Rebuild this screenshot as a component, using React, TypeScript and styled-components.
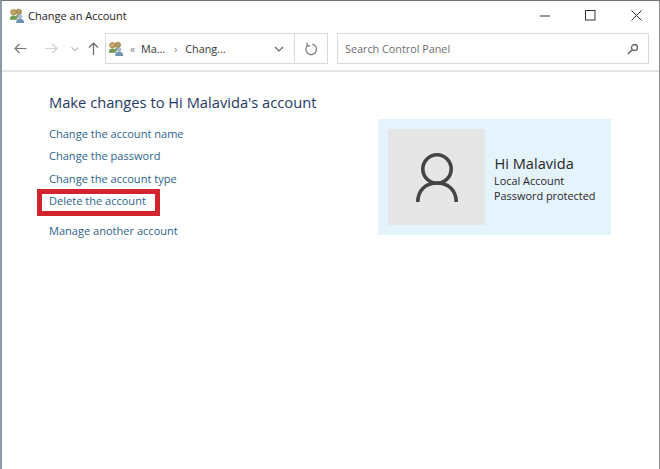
import React from 'react'
import styled, { createGlobalStyle } from 'styled-components'

const GlobalStyle = createGlobalStyle`
  html, body {
    margin: 0;
    padding: 0;
    background: #fff;
  }
`

const Window = styled.div`
  box-sizing: border-box;
  width: 660px;
  height: 469px;
  overflow: hidden;
  background: #fff;
  border-top: 1px solid #70757a;
  border-left: 2px solid #8c9ba8;
  border-right: 1px solid #8a8a8a;
  font-family: 'Open Sans', 'Liberation Sans', sans-serif;
`

const TitleBar = styled.div`
  display: flex;
  align-items: center;
  height: 29px;
  padding-left: 7px;
`

const TitleText = styled.span`
  margin-left: 3px;
  font-size: 11px;
  color: #222;
`

const WindowButtons = styled.div`
  display: flex;
  margin-left: auto;
`

const WindowButton = styled.div`
  display: flex;
  align-items: center;
  justify-content: center;
  width: 45.5px;
  height: 29px;
`

const NavBar = styled.div`
  display: flex;
  align-items: center;
  height: 33px;
  margin-top: 2px;
  padding-right: 10px;
`

const NavButtons = styled.div`
  display: flex;
  align-items: center;
  box-sizing: border-box;
  width: 103px;
  padding-left: 12px;
`

const NavIcon = styled.span<{ $gap: number }>`
  display: flex;
  margin-left: ${(p) => p.$gap}px;
`

const AddressBox = styled.div`
  display: flex;
  align-items: center;
  box-sizing: border-box;
  width: 223px;
  height: 31px;
  border: 1px solid #dadada;
  font-size: 10.8px;
  color: #333;
`

const Crumbs = styled.div`
  display: flex;
  align-items: center;
  flex: 1;
  padding-left: 2px;
`

const CrumbSep = styled.span<{ $wide?: boolean }>`
  margin: 0 ${(p) => (p.$wide ? '8px' : '6px')} 0 ${(p) => (p.$wide ? '9px' : '6px')};
  font-size: 10px;
  color: #777;
`

const RefreshCell = styled.div`
  display: flex;
  align-items: center;
  justify-content: center;
  width: 32px;
  height: 100%;
  border-left: 1px solid #dadada;
`

const DropCell = styled.div`
  display: flex;
  margin-right: 10px;
`

const SearchBox = styled.div`
  display: flex;
  align-items: center;
  justify-content: space-between;
  box-sizing: border-box;
  width: 312px;
  height: 31px;
  margin-left: 9px;
  padding: 0 9px 0 7px;
  border: 1px solid #dadada;
  font-size: 10.8px;
  color: #6d6d6d;
`

const Divider = styled.div`
  height: 2px;
  margin-top: 5px;
  background: #e6e6e6;
`

const Content = styled.div`
  display: flex;
  align-items: flex-start;
  padding: 20px 47px 0 47px;
`

const Tasks = styled.div`
  display: flex;
  flex-direction: column;
  width: 329px;
`

const Heading = styled.h1`
  margin: 0 0 11px;
  font-size: 14.7px;
  line-height: 20px;
  font-weight: 400;
  color: #1f3a66;
`

const TaskLink = styled.a<{ $highlight?: boolean; $gap?: boolean }>`
  position: relative;
  align-self: flex-start;
  height: 22.4px;
  line-height: 22.4px;
  margin-top: ${(p) => (p.$gap ? '7.5px' : '0')};
  font-size: 11.05px;
  color: #2d648a;

  ${(p) =>
    p.$highlight &&
    `
    &::after {
      content: '';
      position: absolute;
      top: -1px;
      bottom: -3px;
      left: -12px;
      right: -14px;
      border: 5px solid #d2232e;
    }
  `}
`

const AccountCard = styled.div`
  display: flex;
  align-items: center;
  box-sizing: border-box;
  width: 233px;
  height: 116px;
  margin-top: 27px;
  padding: 10px;
  background: #e5f3fd;
`

const Avatar = styled.div`
  display: flex;
  align-items: center;
  justify-content: center;
  width: 97px;
  height: 96px;
  background: #e6e6e6;
`

const AccountInfo = styled.div`
  display: flex;
  flex-direction: column;
  margin-left: 9px;
  padding-top: 3px;
  font-size: 10.9px;
  line-height: 15.5px;
  color: #262626;
`

const AccountName = styled.span`
  margin-bottom: 1px;
  padding-left: 0.5px;
  font-size: 14.6px;
  line-height: 18px;
`

const UsersIcon = () => (
  <svg width="16" height="16" viewBox="0 0 17 16">
    <circle cx="4.8" cy="4" r="3" fill="#c9a868" stroke="#7e6a3a" strokeWidth="0.6" />
    <path d="M0.8 12c0-3 1.6-4.6 4-4.6s4 1.6 4 4.6z" fill="#6f9a52" />
    <circle cx="10.5" cy="3.6" r="2.9" fill="#b9985c" stroke="#7e6a3a" strokeWidth="0.6" />
    <path d="M7 10c0-2.6 1.4-4 3.5-4S14 7.4 14 10z" fill="#8a9a6e" />
    <circle cx="11.8" cy="8.4" r="2.3" fill="#a7bccd" />
    <path d="M7.6 15.5c0-3 1.8-4.8 4.2-4.8s4.4 1.8 4.4 4.8z" fill="#6f93b3" />
  </svg>
)

const Arrow = ({ flip, color }: { flip?: boolean; color: string }) => (
  <svg width="13" height="11" viewBox="0 0 13 11" transform={flip ? 'scale(-1 1)' : undefined}>
    <path d="M12.5 5.5H1M5.5 1 1 5.5 5.5 10" fill="none" stroke={color} strokeWidth="1.2" />
  </svg>
)

const Chevron = ({ size, color }: { size: number; color: string }) => (
  <svg width={size} height={size} viewBox="0 0 10 10">
    <path d="M1 3 5 7 9 3" fill="none" stroke={color} strokeWidth="1.2" />
  </svg>
)

export default function App() {
  return (
    <>
      <GlobalStyle />
      <Window>
        <TitleBar>
          <UsersIcon />
          <TitleText>Change an Account</TitleText>
          <WindowButtons>
            <WindowButton>
              <svg width="10" height="10" viewBox="0 0 10 10">
                <path d="M0 5h10" stroke="#333" strokeWidth="1" />
              </svg>
            </WindowButton>
            <WindowButton>
              <svg width="11" height="11" viewBox="0 0 11 11">
                <rect x="0.5" y="0.5" width="9.5" height="9.5" fill="none" stroke="#333" />
              </svg>
            </WindowButton>
            <WindowButton>
              <svg width="11" height="11" viewBox="0 0 11 11">
                <path d="M0.5 0.5l10 10M10.5 0.5l-10 10" stroke="#333" strokeWidth="1" />
              </svg>
            </WindowButton>
          </WindowButtons>
        </TitleBar>
        <NavBar>
          <NavButtons>
            <NavIcon $gap={0}>
              <Arrow color="#777" />
            </NavIcon>
            <NavIcon $gap={18}>
              <Arrow flip color="#cfcfcf" />
            </NavIcon>
            <NavIcon $gap={13}>
              <Chevron size={8} color="#888" />
            </NavIcon>
            <NavIcon $gap={9}>
              <svg width="11" height="13" viewBox="0 0 11 13">
                <path d="M5.5 13V1M1 5.5 5.5 1 10 5.5" fill="none" stroke="#666" strokeWidth="1.2" />
              </svg>
            </NavIcon>
          </NavButtons>
          <AddressBox>
            <Crumbs>
              <UsersIcon />
              <CrumbSep>«</CrumbSep>
              Ma...
              <CrumbSep $wide>›</CrumbSep>
              Chang...
            </Crumbs>
            <DropCell>
              <Chevron size={10} color="#666" />
            </DropCell>
            <RefreshCell>
              <svg width="14" height="14" viewBox="0 0 14 14">
                <path d="M8.5 2.2A5.3 5.3 0 1 1 3.6 3.4" fill="none" stroke="#777" strokeWidth="1.2" />
                <path d="M3.2 0.8v3h3" fill="none" stroke="#777" strokeWidth="1.2" />
              </svg>
            </RefreshCell>
          </AddressBox>
          <SearchBox>
            Search Control Panel
            <svg width="12" height="12" viewBox="0 0 12 12">
              <circle cx="7.5" cy="4.5" r="3" fill="none" stroke="#666" strokeWidth="1.3" />
              <path d="M5.3 6.7 1 11" stroke="#666" strokeWidth="1.6" />
            </svg>
          </SearchBox>
        </NavBar>
        <Divider />
        <Content>
          <Tasks>
            <Heading>Make changes to Hi Malavida's account</Heading>
            <TaskLink>Change the account name</TaskLink>
            <TaskLink>Change the password</TaskLink>
            <TaskLink>Change the account type</TaskLink>
            <TaskLink $highlight>Delete the account</TaskLink>
            <TaskLink $gap>Manage another account</TaskLink>
          </Tasks>
          <AccountCard>
            <Avatar>
              <svg width="42" height="49" viewBox="0 0 42 49">
                <circle cx="21" cy="16" r="14.2" fill="none" stroke="#444" strokeWidth="3.6" />
                <path d="M1.8 49C1.8 37 10 30 21 30s19.2 7 19.2 19" fill="none" stroke="#444" strokeWidth="3.6" />
              </svg>
            </Avatar>
            <AccountInfo>
              <AccountName>Hi Malavida</AccountName>
              <span>Local Account</span>
              <span>Password protected</span>
            </AccountInfo>
          </AccountCard>
        </Content>
      </Window>
    </>
  )
}
